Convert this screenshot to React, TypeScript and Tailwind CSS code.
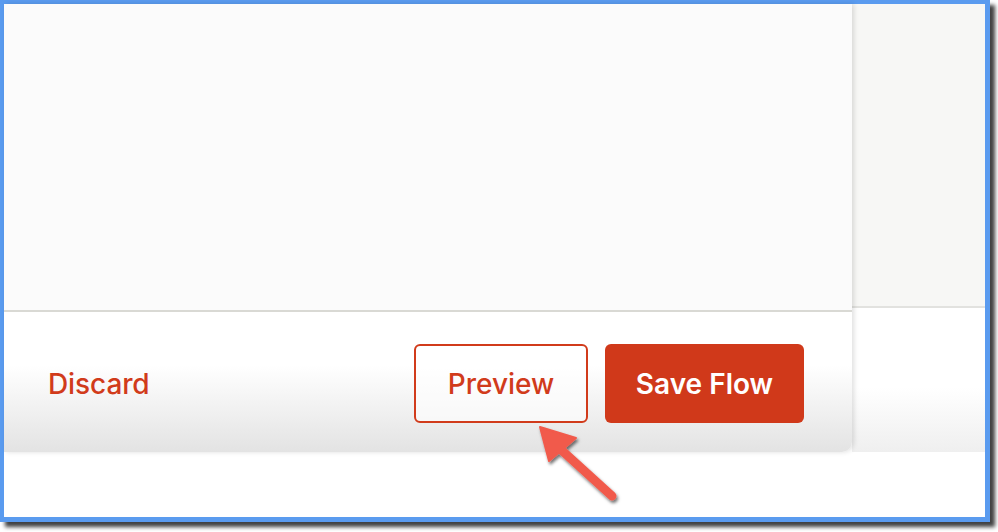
import React from "react";

function PointerArrow() {
  return (
    <svg
      className="absolute z-20 left-[520px] top-[415px]"
      width="120"
      height="110"
      viewBox="520 415 120 110"
    >
      <defs>
        <filter id="arrowShadow" x="-30%" y="-30%" width="160%" height="160%">
          <feDropShadow dx="1.5" dy="2.5" stdDeviation="1.6" floodColor="#000" floodOpacity="0.55" />
        </filter>
      </defs>
      <g filter="url(#arrowShadow)">
        <line x1="557" y1="446" x2="612" y2="496" stroke="#f15a4b" strokeWidth="9" strokeLinecap="round" />
        <polygon points="540,427 576,438 549,461" fill="#f15a4b" stroke="#f15a4b" strokeWidth="2" strokeLinejoin="round" />
      </g>
    </svg>
  );
}

export default function App() {
  return (
    <div className="relative w-[998px] h-[532px] bg-white overflow-hidden" style={{ fontFamily: "Inter, 'Noto Sans', sans-serif" }}>
      {/* framed screenshot */}
      <div className="w-[990px] h-[522px] border-l-4 border-t-4 border-r-[5px] border-b-[5px] border-[#5a9bef] shadow-[5px_5px_4px_rgba(0,0,0,0.75)] flex flex-col bg-white">
        <div className="flex h-[448px]">
          {/* editor panel */}
          <div className="relative z-10 w-[848px] flex flex-col rounded-br-[10px] overflow-hidden shadow-[2px_0_5px_rgba(0,0,0,0.13)]">
            <div className="flex-1 bg-[#fbfbfb]" />
            <div className="h-[142px] border-t-[2px] border-[#d9d9d4] bg-[linear-gradient(to_bottom,#ffffff_38%,#e3e3e3)] flex items-center pt-[3px] pl-[44px] pr-[48px]">
              <button className="text-[28px] font-medium text-[#d13b1b] tracking-[-0.1px]">Discard</button>
              <div className="ml-auto flex gap-[17px]">
                <button className="w-[174px] h-[79px] rounded-[6px] border-2 border-[#d13b1b] bg-white/60 text-[28px] font-medium text-[#d13b1b]">
                  Preview
                </button>
                <button className="w-[199px] h-[79px] rounded-[6px] bg-[#d0391a] text-[28px] font-semibold text-white">
                  Save Flow
                </button>
              </div>
            </div>
          </div>
          {/* side area */}
          <div className="flex-1 flex flex-col">
            <div className="h-[304px] bg-[#f7f7f5] border-b-[2px] border-[#e2e2df]" />
            <div className="flex-1 bg-[linear-gradient(to_bottom,#ffffff_55%,#efefef)]" />
          </div>
        </div>
        <div className="flex-1 bg-white" />
      </div>
      <PointerArrow />
    </div>
  );
}
